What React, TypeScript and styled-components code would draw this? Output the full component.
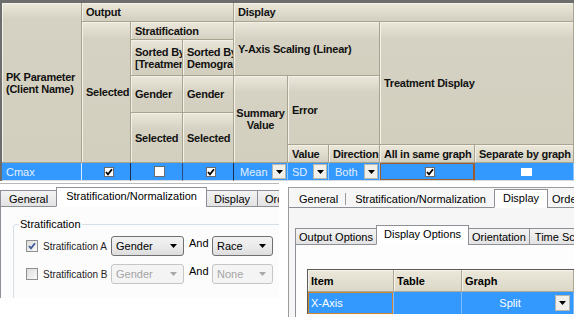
import React from "react";
import styled, { createGlobalStyle } from "styled-components";

const GlobalStyle = createGlobalStyle`
	html, body {
		margin: 0;
		padding: 0;
		background: #fff;
	}
	body {
		width: 574px;
		height: 317px;
		overflow: hidden;
		font-family: "Liberation Sans", Arial, sans-serif;
	}
`;

/* ---------- top grid ---------- */

const TopGrid = styled.div`
	display: grid;
	grid-template-columns: 80px 49px 52px 51px 54px 41px 51px 95px 1fr;
	grid-template-rows: 19px 18px 36px 37px 32px 18px 18px;
	border-top: 3px solid #6d6d6d;
	border-left: 2px solid #6d6d6d;
	background: #d4d0c0;
	font: bold 11px "Liberation Sans", Arial, sans-serif;
	letter-spacing: -0.25px;
	color: #111;
`;

const Head = styled.div<{ $col: string; $row: string; $center?: boolean }>`
	grid-column: ${(p) => p.$col};
	grid-row: ${(p) => p.$row};
	display: flex;
	align-items: center;
	justify-content: ${(p) => (p.$center ? "center" : "flex-start")};
	text-align: ${(p) => (p.$center ? "center" : "left")};
	padding: 0 1px 0 ${(p) => (p.$center ? 1 : 4)}px;
	overflow: hidden;
	white-space: nowrap;
	line-height: 12px;
	background: linear-gradient(#ebe8db, #d6d2c3 16px, #d3cfbf);
	border-right: 1px solid #a8a490;
	border-bottom: 1px solid #a8a490;
	box-shadow: inset 1px 1px 0 #f3f1e8;
`;

const Cell = styled.div<{ $col: string; $line?: string; $focus?: boolean; $center?: boolean; $pad?: number }>`
	grid-column: ${(p) => p.$col};
	grid-row: 7;
	display: flex;
	align-items: center;
	justify-content: ${(p) => (p.$center ? "center" : "flex-start")};
	padding: 0 1px 0 ${(p) => p.$pad ?? 6}px;
	background: #3399ff;
	color: #e3efff;
	font: 11px "Liberation Sans", Arial, sans-serif;
	letter-spacing: 0;
	border-right: 1px solid ${(p) => p.$line ?? "#8cc4ff"};
	border-bottom: 1px solid #d8d8d8;
	box-shadow: ${(p) => (p.$focus ? "inset 0 0 0 1px #9b5e2c" : "none")};
`;

const Grow = styled.span`
	flex: 1;
`;

const GridBox = styled.span<{ $w: number; $h: number; $bare?: boolean }>`
	display: inline-flex;
	align-items: center;
	justify-content: center;
	width: ${(p) => p.$w}px;
	height: ${(p) => p.$h}px;
	box-sizing: border-box;
	background: #fff;
	border: 1px solid ${(p) => (p.$bare ? "#ffffff" : "#6a6a6a")};
`;

const DropBtn = styled.span<{ $w?: number; $h?: number }>`
	display: inline-flex;
	align-items: center;
	justify-content: center;
	width: ${(p) => p.$w ?? 14}px;
	height: ${(p) => p.$h ?? 15}px;
	box-sizing: border-box;
	background: #f1efe9;
	border: 1px solid #b9b6ad;
`;

const Tick = ({ color = "#000", size = 8 }: { color?: string; size?: number }) => (
	<svg width={size} height={size} viewBox="0 0 8 8">
		<path d="M1 4 L3 6.3 L7 1.2" fill="none" stroke={color} strokeWidth="1.8" />
	</svg>
);

const Tri = ({ color = "#000" }: { color?: string }) => (
	<svg width="7" height="4" viewBox="0 0 7 4">
		<path d="M0 0 H7 L3.5 4 Z" fill={color} />
	</svg>
);

/* ---------- bottom ---------- */

const Bottom = styled.div`
	display: flex;
	align-items: flex-start;
	gap: 9px;
`;

const LeftPanel = styled.div`
	width: 279px;
	height: 114px;
	margin-top: 2px;
	border-top: 1px solid #b9b9b9;
	background: #fff;
	display: flex;
	flex-direction: column;
	overflow: hidden;
	font: 11px "Liberation Sans", Arial, sans-serif;
	color: #000;
`;

const TabStrip = styled.div<{ $h: number }>`
	display: flex;
	align-items: flex-end;
	height: ${(p) => p.$h}px;
	flex: none;
`;

const Tab = styled.div<{ $active?: boolean; $pad?: number; $h?: number }>`
	display: flex;
	align-items: center;
	box-sizing: border-box;
	height: ${(p) => (p.$active ? (p.$h ?? 17) + 3 : p.$h ?? 17)}px;
	padding: 0 ${(p) => p.$pad ?? 8}px ${(p) => (p.$active ? 2 : 0)}px;
	border: 1px solid #8d9097;
	border-bottom: ${(p) => (p.$active ? "1px solid transparent" : "1px solid #8d9097")};
	margin-right: -1px;
	background: ${(p) => (p.$active ? "#fff" : "linear-gradient(#f3f3f3, #e3e3e3)")};
	white-space: nowrap;
	flex: none;
`;

const TabFill = styled.div`
	flex: 1;
	align-self: stretch;
	border-bottom: 1px solid #8d9097;
`;

const LeftBody = styled.div`
	flex: 1;
	border-left: 1px solid #8d9097;
	background: #fcfcfc;
	padding: 11px 0 0 12px;
	overflow: hidden;
`;

const Group = styled.fieldset`
	margin: 0;
	width: 300px;
	height: 100px;
	box-sizing: border-box;
	border: 1px solid #d5dfe5;
	border-radius: 3px;
	padding: 2px 0 0 12px;
	legend {
		padding: 0 1px;
		margin-left: -7px;
		font-size: 11px;
	}
`;

const OptRow = styled.div`
	display: flex;
	align-items: center;
	height: 28px;
	font-size: 10px;
`;

const Box = styled.span`
	display: inline-flex;
	align-items: center;
	justify-content: center;
	width: 12px;
	height: 12px;
	box-sizing: border-box;
	border: 1px solid #8e8f8f;
	background: linear-gradient(135deg, #dcdcdc, #fafafa);
	flex: none;
`;

const OptLabel = styled.span`
	width: 62px;
	margin-left: 5px;
	white-space: nowrap;
	color: #222;
`;

const Select = styled.div<{ $w: number; $off?: boolean; $gap?: number }>`
	display: flex;
	align-items: center;
	width: ${(p) => p.$w}px;
	height: 20px;
	box-sizing: border-box;
	margin-left: ${(p) => p.$gap ?? 6}px;
	padding: 0 6px 0 4px;
	border: 1px solid ${(p) => (p.$off ? "#c6c6c6" : "#707070")};
	border-radius: 3px;
	background: ${(p) => (p.$off ? "#f4f4f4" : "linear-gradient(#f2f2f2, #ebebeb 50%, #dddddd)")};
	color: ${(p) => (p.$off ? "#a4a4a4" : "#000")};
	font-size: 11px;
	flex: none;
`;

const And = styled.span`
	width: 28px;
	box-sizing: border-box;
	padding: 0 0 6px 5px;
	font-size: 11px;
`;

const RightPanel = styled.div`
	flex: 1;
	height: 130px;
	margin-top: 6px;
	border-top: 1px solid #9c9c9c;
	border-left: 1px solid #9c9c9c;
	background: #f6f6f6;
	display: flex;
	flex-direction: column;
	overflow: hidden;
	font: 11px "Liberation Sans", Arial, sans-serif;
	color: #000;
`;

const FlatTab = styled.div<{ $pad: string }>`
	display: flex;
	align-items: center;
	height: 17px;
	padding: ${(p) => p.$pad};
	border-bottom: 1px solid #8d9097;
	white-space: nowrap;
	flex: none;
`;

const SepWrap = styled.div`
	display: flex;
	align-items: center;
	height: 17px;
	border-bottom: 1px solid #8d9097;
	flex: none;
`;

const Sep = styled.div`
	width: 1px;
	height: 12px;
	background: #9c9c9c;
`;

const RightBody = styled.div`
	flex: 1;
	padding: 17px 0 0 6px;
	display: flex;
	flex-direction: column;
`;

const InnerBody = styled.div`
	flex: 1;
	background: #fdfdfd;
	border-left: 1px solid #8d9097;
	padding: 24px 0 0 11px;
`;

const ItemGrid = styled.div`
	display: grid;
	grid-template-columns: 86px 68px 1fr;
	grid-template-rows: 22px 22px;
	border-top: 1px solid #5a5a5a;
	border-left: 1px solid #5a5a5a;
`;

const ItemHead = styled.div`
	display: flex;
	align-items: center;
	padding-left: 3px;
	font: bold 11px "Liberation Sans", Arial, sans-serif;
	background: linear-gradient(#ebe8da, #dcd8c8);
	border-right: 1px solid #aca894;
	border-bottom: 1px solid #aca894;
	box-shadow: inset 1px 1px 0 #f6f4ec;
`;

const ItemCell = styled.div<{ $focus?: boolean }>`
	display: flex;
	align-items: center;
	padding: 0 3px;
	background: #3399ff;
	color: #fff;
	border-right: 1px solid #7fbaff;
	box-shadow: ${(p) => (p.$focus ? "inset 0 0 0 1px #d0832f" : "none")};
`;

const App = () => (
	<>
		<GlobalStyle />
		<TopGrid>
			<Head $col="1" $row="1 / 7">
				PK Parameter
				<br />
				(Client Name)
			</Head>
			<Head $col="2 / 5" $row="1">Output</Head>
			<Head $col="5 / 10" $row="1">Display</Head>
			<Head $col="2" $row="2 / 7">Selected</Head>
			<Head $col="3 / 5" $row="2">Stratification</Head>
			<Head $col="5 / 8" $row="2 / 4">Y-Axis Scaling (Linear)</Head>
			<Head $col="8 / 10" $row="2 / 6">Treatment Display</Head>
			<Head $col="3" $row="3">
				Sorted By
				<br />
				[Treatment]
			</Head>
			<Head $col="4" $row="3">
				Sorted By
				<br />
				Demographics
			</Head>
			<Head $col="3" $row="4">Gender</Head>
			<Head $col="4" $row="4">Gender</Head>
			<Head $col="5" $row="4 / 7" $center>
				Summary
				<br />
				Value
			</Head>
			<Head $col="6 / 8" $row="4 / 6">Error</Head>
			<Head $col="3" $row="5 / 7">Selected</Head>
			<Head $col="4" $row="5 / 7">Selected</Head>
			<Head $col="6" $row="6">Value</Head>
			<Head $col="7" $row="6">Direction</Head>
			<Head $col="8" $row="6">All in same graph</Head>
			<Head $col="9" $row="6">Separate by graph</Head>

			<Cell $col="1" $pad={4} $line="#d9e9ff">Cmax</Cell>
			<Cell $col="2" $center $line="#1b2f55">
				<GridBox $w={10} $h={10}>
					<Tick />
				</GridBox>
			</Cell>
			<Cell $col="3" $center $line="#2a4a80">
				<GridBox $w={11} $h={11} />
			</Cell>
			<Cell $col="4" $center $line="#1b2f55">
				<GridBox $w={10} $h={10}>
					<Tick />
				</GridBox>
			</Cell>
			<Cell $col="5">
				Mean
				<Grow />
				<DropBtn>
					<Tri />
				</DropBtn>
			</Cell>
			<Cell $col="6" $pad={4}>
				SD
				<Grow />
				<DropBtn>
					<Tri />
				</DropBtn>
			</Cell>
			<Cell $col="7">
				Both
				<Grow />
				<DropBtn>
					<Tri />
				</DropBtn>
			</Cell>
			<Cell $col="8" $center $focus $line="#9b5e2c">
				<GridBox $w={10} $h={10}>
					<Tick />
				</GridBox>
			</Cell>
			<Cell $col="9" $center>
				<GridBox $w={11} $h={8} $bare />
			</Cell>
		</TopGrid>

		<Bottom>
			<LeftPanel>
				<TabStrip $h={23}>
					<Tab $pad={8}>General</Tab>
					<Tab $active $pad={9}>
						Stratification/Normalization
					</Tab>
					<Tab $pad={7}>Display</Tab>
					<Tab $pad={7}>Order</Tab>
					<TabFill />
				</TabStrip>
				<LeftBody>
					<Group>
						<legend>Stratification</legend>
						<OptRow>
							<Box>
								<Tick color="#3f5a96" />
							</Box>
							<OptLabel>Stratification A</OptLabel>
							<Select $w={73}>
								Gender
								<Grow />
								<Tri />
							</Select>
							<And>And</And>
							<Select $w={61} $gap={0}>
								Race
								<Grow />
								<Tri />
							</Select>
						</OptRow>
						<OptRow>
							<Box />
							<OptLabel>Stratification B</OptLabel>
							<Select $w={73} $off>
								Gender
								<Grow />
								<Tri color="#a8a8a8" />
							</Select>
							<And>And</And>
							<Select $w={61} $off $gap={0}>
								None
								<Grow />
								<Tri color="#a8a8a8" />
							</Select>
						</OptRow>
					</Group>
				</LeftBody>
			</LeftPanel>

			<RightPanel>
				<TabStrip $h={20}>
					<FlatTab $pad="0 7px 0 10px">General</FlatTab>
					<SepWrap>
						<Sep />
					</SepWrap>
					<FlatTab $pad="0 8px 0 9px">Stratification/Normalization</FlatTab>
					<Tab $active $h={16} $pad={8}>
						Display
					</Tab>
					<FlatTab $pad="0 0 0 5px">Order</FlatTab>
					<TabFill />
				</TabStrip>
				<RightBody>
					<TabStrip $h={20}>
						<Tab $pad={3}>Output Options</Tab>
						<Tab $active $pad={7}>
							Display Options
						</Tab>
						<Tab $pad={3}>Orientation</Tab>
						<Tab $pad={5}>Time Scale</Tab>
						<TabFill />
					</TabStrip>
					<InnerBody>
						<ItemGrid>
							<ItemHead>Item</ItemHead>
							<ItemHead>Table</ItemHead>
							<ItemHead>Graph</ItemHead>
							<ItemCell $focus>X-Axis</ItemCell>
							<ItemCell />
							<ItemCell>
								<Grow />
								Split
								<Grow />
								<DropBtn $w={15} $h={16}>
									<Tri />
								</DropBtn>
							</ItemCell>
						</ItemGrid>
					</InnerBody>
				</RightBody>
			</RightPanel>
		</Bottom>
	</>
);

export default App;
